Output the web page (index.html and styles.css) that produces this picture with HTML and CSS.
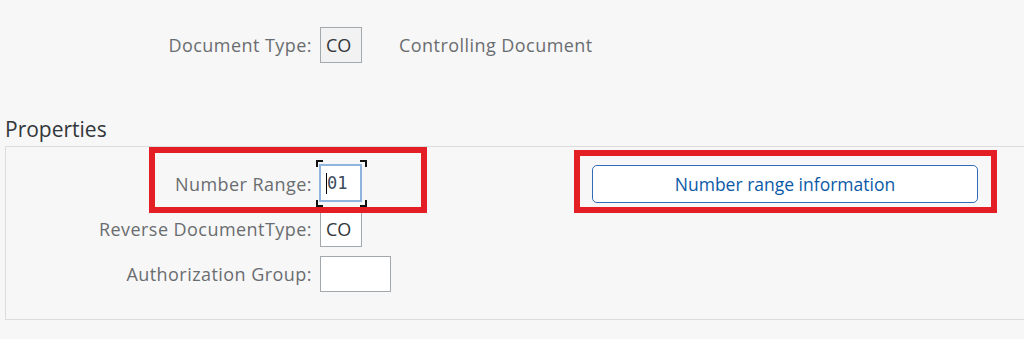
FILE: index.html
```html
<!DOCTYPE html>
<html lang="en">
<head>
    <meta charset="UTF-8">
    <title>Document Type CO</title>
    <link rel="stylesheet" href="styles.css">
</head>
<body>
    <div class="head-row">
        <span class="label">Document Type:</span>
        <span class="field readonly">CO</span>
        <span class="desc">Controlling Document</span>
    </div>

    <h2>Properties</h2>
    <div class="panel">
        <div class="mark mark-range"></div>
        <div class="mark mark-button"></div>

        <div class="form">
            <span class="label">Number Range:</span>
            <span class="focus"><span class="field active"><span class="caret"></span>01</span></span>
            <button class="btn">Number range information</button>

            <span class="label">Reverse DocumentType:</span>
            <span class="field">CO</span>
            <span></span>

            <span class="label">Authorization Group:</span>
            <span class="field wide"></span>
            <span></span>
        </div>
    </div>
</body>
</html>
```

FILE: styles.css
```css
body {
    margin: 0;
    background: #f7f7f7;
    font-family: "Open Sans", "Noto Sans", sans-serif;
    font-size: 18px;
    letter-spacing: 0.45px;
    color: #32363a;
}
.label {
    color: #6a6d70;
    text-align: right;
    white-space: nowrap;
}
.field {
    box-sizing: border-box;
    display: flex;
    align-items: center;
    width: 42px;
    height: 36px;
    padding: 0 5px;
    background: #fff;
    border: 1px solid #a3a8ad;
    color: #32363a;
    letter-spacing: 0;
}
.field.readonly {
    background: #f2f2f2;
}
.field.wide {
    width: 71px;
}
.head-row {
    display: grid;
    grid-template-columns: 312px 42px auto;
    column-gap: 8px;
    align-items: center;
    padding-top: 27px;
}
.head-row .desc {
    margin-left: 29px;
    color: #6a6d70;
}
h2 {
    margin: 52px 0 0 5px;
    font-size: 21px;
    font-weight: normal;
    letter-spacing: 0;
    line-height: 28px;
}
.panel {
    position: relative;
    margin: 3px 0 0 5px;
    height: 174px;
    border: 1px solid #dcdcdc;
    border-right: none;
    box-sizing: border-box;
    padding-top: 19px;
}
.form {
    display: grid;
    grid-template-columns: 306px 42px auto;
    grid-auto-rows: 36px;
    row-gap: 9px;
    column-gap: 8px;
    align-items: center;
}
.focus {
    position: relative;
    display: block;
    height: 36px;
}
.focus::before {
    content: "";
    position: absolute;
    left: -4px;
    right: -5px;
    top: -6px;
    bottom: -5px;
    background:
        linear-gradient(#111, #111) left top / 7px 2px no-repeat,
        linear-gradient(#111, #111) left top / 2px 7px no-repeat,
        linear-gradient(#111, #111) right top / 7px 2px no-repeat,
        linear-gradient(#111, #111) right top / 2px 7px no-repeat,
        linear-gradient(#111, #111) left bottom / 7px 2px no-repeat,
        linear-gradient(#111, #111) left bottom / 2px 7px no-repeat,
        linear-gradient(#111, #111) right bottom / 7px 2px no-repeat,
        linear-gradient(#111, #111) right bottom / 2px 7px no-repeat;
}
.field.active {
    height: 38px;
    width: 43px;
    margin: -2px 0 0 -1px;
    border: 2px solid #8fb4de;
    padding-left: 5px;
    font-family: "DejaVu Sans Mono", monospace;
    font-size: 17px;
    color: #3b4a5a;
}
.caret {
    width: 1px;
    height: 21px;
    background: #000;
}
.btn {
    justify-self: start;
    margin-left: 222px;
    width: 386px;
    height: 38px;
    background: #fff;
    border: 1px solid #2f6db5;
    border-radius: 5px;
    color: #0b5aa8;
    font-family: inherit;
    font-size: 17.5px;
    letter-spacing: 0;
}
.mark {
    position: absolute;
    border: 6px solid #e31e24;
    box-sizing: border-box;
}
.mark-range {
    left: 143px;
    top: 0;
    width: 278px;
    height: 66px;
}
.mark-button {
    left: 568px;
    top: 3px;
    width: 423px;
    height: 63px;
}
```
